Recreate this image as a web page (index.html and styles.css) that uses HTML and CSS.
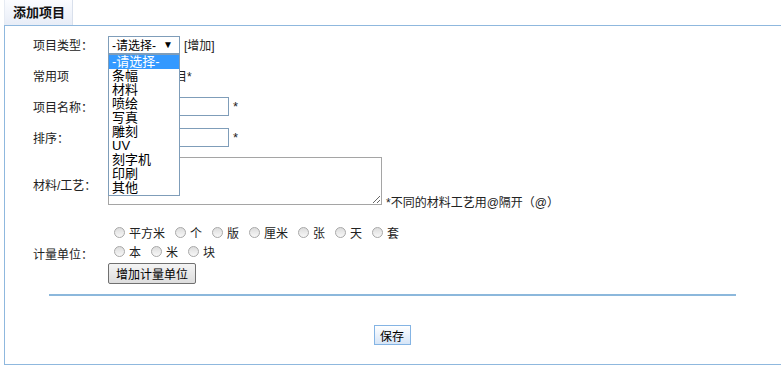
FILE: index.html
```html
<!DOCTYPE html>
<html lang="zh-CN">
<head>
  <meta charset="UTF-8">
  <title>添加项目</title>
  <link rel="stylesheet" href="styles.css">
</head>
<body>

  <div class="tab">添加项目</div>

  <div class="panel">
    <div class="row row-type">
      <label class="label">项目类型：</label>
      <div class="field">
        <div class="select-wrap">
          <span class="select">-请选择-<span class="arrow">▼</span></span>
          <ul class="options">
            <li class="active">-请选择-</li>
            <li>条幅</li>
            <li>材料</li>
            <li>喷绘</li>
            <li>写真</li>
            <li>雕刻</li>
            <li>UV</li>
            <li>刻字机</li>
            <li>印刷</li>
            <li>其他</li>
          </ul>
        </div>
        <a class="add-link">[增加]</a>
      </div>
    </div>

    <div class="row">
      <label class="label">常用项</label>
      <div class="field">
        <span class="common">是否常用项目*</span>
      </div>
    </div>

    <div class="row">
      <label class="label">项目名称：</label>
      <div class="field">
        <input type="text" class="text-input"> <span class="req">*</span>
      </div>
    </div>

    <div class="row">
      <label class="label">排序：</label>
      <div class="field">
        <input type="text" class="text-input"> <span class="req">*</span>
      </div>
    </div>

    <div class="row row-material">
      <label class="label">材料/工艺：</label>
      <div class="field field-bottom">
        <textarea class="textarea"></textarea>
        <span class="note">*不同的材料工艺用@隔开（@）</span>
      </div>
    </div>

    <div class="row row-unit">
      <label class="label">计量单位：</label>
      <div class="field field-stack">
        <div class="radios">
          <label><input type="radio" name="unit">平方米</label>
          <label><input type="radio" name="unit">个</label>
          <label><input type="radio" name="unit">版</label>
          <label><input type="radio" name="unit">厘米</label>
          <label><input type="radio" name="unit">张</label>
          <label><input type="radio" name="unit">天</label>
          <label><input type="radio" name="unit">套</label>
        </div>
        <div class="radios">
          <label><input type="radio" name="unit">本</label>
          <label><input type="radio" name="unit">米</label>
          <label><input type="radio" name="unit">块</label>
        </div>
        <button class="btn-gray">增加计量单位</button>
      </div>
    </div>

    <div class="divider"></div>

    <div class="actions">
      <button class="btn-save">保存</button>
    </div>
  </div>

</body>
</html>
```

FILE: styles.css
```css
body {
  margin: 0;
  font-family: "Liberation Sans", "Noto Sans CJK SC", sans-serif;
  font-size: 12px;
  color: #222;
  background-color: #fff;
  overflow: hidden;
}
.tab {
  display: inline-block;
  margin-left: 4px;
  width: 69px;
  height: 25px;
  line-height: 26px;
  padding-left: 8px;
  box-sizing: border-box;
  font-size: 13px;
  font-weight: bold;
  color: #111;
  background: linear-gradient(#fbfcff, #e8edf7);
  border-right: 1px solid #d9e0ec;
  border-left: 1px solid #e6ebf3;
  vertical-align: top;
}
.panel {
  margin-left: 4px;
  height: 340px;
  padding-top: 3px;
  box-sizing: border-box;
  border-left: 1px solid #8fb8de;
  border-top: 1px solid #8fb8de;
  border-bottom: 1px solid #8fb8de;
}
.row {
  display: grid;
  grid-template-columns: 75px 1fr;
  align-items: center;
  height: 31px;
  padding-left: 28px;
}
.label {
  white-space: nowrap;
}
.field {
  display: flex;
  align-items: center;
  gap: 4px;
}
.select-wrap {
  position: relative;
}
.select {
  display: flex;
  align-items: center;
  justify-content: space-between;
  width: 72px;
  height: 18px;
  box-sizing: border-box;
  padding: 0 6px 0 3px;
  border: 1px solid #7f9db9;
  font-size: 12px;
  color: #000;
}
.arrow {
  font-size: 10px;
}
.options {
  position: absolute;
  left: 0;
  top: 18px;
  z-index: 5;
  width: 70px;
  margin: 0;
  padding: 0;
  list-style: none;
  background-color: #fff;
  border: 1px solid #7f9db9;
}
.options li {
  height: 14px;
  line-height: 14px;
  padding-left: 3px;
  font-size: 13px;
  color: #000;
}
.options li.active {
  background-color: #3399ff;
  color: #fff;
}
.add-link {
  color: #222;
}
.common {
  padding-left: 7px;
}
.text-input {
  width: 121px;
  height: 19px;
  box-sizing: border-box;
  margin: 0;
  border: 1px solid #7f9db9;
  padding: 0 2px;
}
.req {
  font-size: 13px;
}
.row-material {
  height: 56px;
}
.row-material .label {
  padding-top: 7px;
}
.field-bottom {
  align-items: flex-end;
}
.textarea {
  width: 274px;
  height: 48px;
  box-sizing: border-box;
  margin: 0;
  border: 1px solid #a5a5a5;
  resize: both;
}
.note {
  line-height: 12px;
  margin-bottom: -4px;
}
.row-unit {
  height: auto;
  padding-top: 14px;
}
.field-stack {
  flex-direction: column;
  align-items: flex-start;
  gap: 0;
}
.radios {
  display: flex;
  height: 19px;
  align-items: center;
  padding-left: 6px;
}
.radios label {
  display: flex;
  align-items: center;
  margin-right: 10px;
}
.radios input {
  appearance: none;
  width: 11px;
  height: 11px;
  margin: 0 4px 0 0;
  border: 1px solid #a8a8a8;
  border-radius: 50%;
  background: linear-gradient(#dcdcdc, #f8f8f8);
  box-sizing: border-box;
}
.btn-gray {
  margin-top: 2px;
  height: 21px;
  padding: 0 7px;
  font-family: inherit;
  font-size: 12px;
  color: #000;
  border: 1px solid #707070;
  border-radius: 2px;
  background: linear-gradient(#f4f4f4, #dddddd);
}
.divider {
  margin: 10px 0 0 44px;
  width: 687px;
  height: 2px;
  background-color: #8cb8dc;
}
.actions {
  display: flex;
  justify-content: center;
  padding-top: 29px;
  padding-right: 2px;
}
.btn-save {
  height: 20px;
  width: 37px;
  padding: 0;
  font-family: inherit;
  font-size: 12px;
  color: #000;
  border: 1px solid #84b4e4;
  background: linear-gradient(#ffffff, #d6e5f7);
}
```
